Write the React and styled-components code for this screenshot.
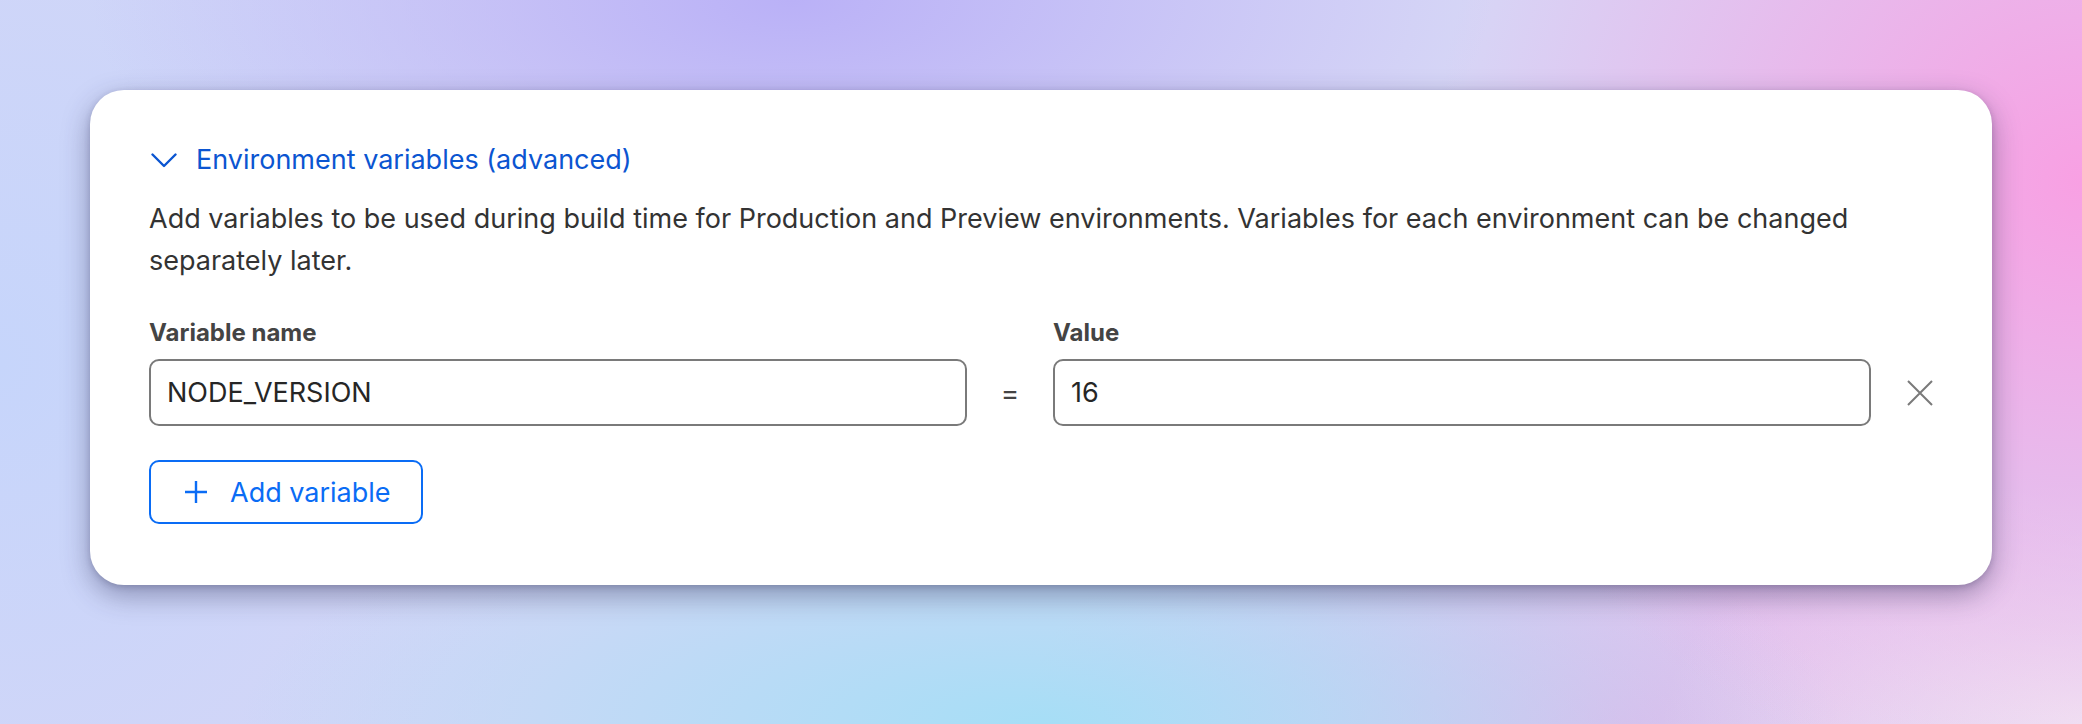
import React from 'react';
import styled, { createGlobalStyle } from 'styled-components';

const GlobalStyle = createGlobalStyle`
  html, body {
    margin: 0;
    padding: 0;
  }
  body {
    font-family: Inter, "Noto Sans", "Liberation Sans", sans-serif;
    -webkit-font-smoothing: antialiased;
  }
`;

const Page = styled.div`
  width: 2082px;
  height: 724px;
  box-sizing: border-box;
  padding: 90px 90px 0 90px;
  overflow: hidden;
  background-color: #d6d6f6;
  background-image:
    radial-gradient(ellipse 700px 300px at 38% 0%, #bab1f7 0%, rgba(186, 177, 247, 0) 100%),
    radial-gradient(ellipse 650px 620px at 100% 25%, #f8a0e3 0%, rgba(248, 160, 227, 0) 100%),
    radial-gradient(ellipse 800px 260px at 50% 100%, #a6def6 0%, rgba(166, 222, 246, 0) 100%),
    radial-gradient(ellipse 600px 700px at 0% 50%, #c6d5fb 0%, rgba(198, 213, 251, 0) 100%),
    radial-gradient(ellipse 420px 240px at 100% 100%, #efe6f4 0%, rgba(239, 230, 244, 0) 100%),
    radial-gradient(ellipse 600px 300px at 78% 100%, #e5b8ea 0%, rgba(229, 184, 234, 0) 100%);
`;

const Card = styled.section`
  width: 1902px;
  box-sizing: border-box;
  background: #ffffff;
  border-radius: 34px;
  padding: 52px 59px 61px 59px;
  box-shadow: 0 10px 28px rgba(40, 40, 80, 0.4), 0 2px 6px rgba(40, 40, 80, 0.2);
  display: flex;
  flex-direction: column;
`;

const Toggle = styled.button`
  display: flex;
  align-items: center;
  gap: 19px;
  padding: 0 0 0 2px;
  margin: 0;
  border: none;
  background: none;
  color: #0b55d1;
  font-family: inherit;
  font-size: 27px;
  line-height: 36px;
  cursor: pointer;
  align-self: flex-start;
`;

const Description = styled.p`
  margin: 20px 0 0 0;
  font-size: 27px;
  line-height: 42px;
  color: #333333;
`;

const Fields = styled.div`
  display: grid;
  grid-template-columns: 1fr 86px 1fr 62px;
  align-items: center;
  row-gap: 10px;
  margin-top: 35px;
`;

const Label = styled.label`
  grid-row: 1;
  grid-column: ${({ $col }) => $col};
  font-size: 24px;
  line-height: 32px;
  font-weight: 700;
  color: #444444;
`;

const Input = styled.input`
  grid-row: 2;
  grid-column: ${({ $col }) => $col};
  box-sizing: border-box;
  width: 100%;
  height: 67px;
  border: 2px solid #7a7a7a;
  border-radius: 10px;
  padding: 0 16px;
  font-family: inherit;
  font-size: 27px;
  color: #262626;
  background: #fff;
  outline: none;
`;

const Equals = styled.span`
  grid-row: 2;
  grid-column: 2;
  text-align: center;
  font-size: 28px;
  color: #444;
`;

const RemoveButton = styled.button`
  grid-row: 2;
  grid-column: 4;
  justify-self: end;
  width: 26px;
  height: 26px;
  padding: 0;
  border: none;
  background: none;
  display: flex;
  cursor: pointer;
`;

const AddButton = styled.button`
  align-self: flex-start;
  display: flex;
  align-items: center;
  gap: 22px;
  height: 64px;
  box-sizing: border-box;
  margin-top: 34px;
  padding: 0 30px 0 33px;
  border: 2px solid #0a6cf5;
  border-radius: 10px;
  background: #fff;
  color: #0a6cf5;
  font-family: inherit;
  font-size: 27px;
  cursor: pointer;
`;

const Chevron = () => (
  <svg width="26" height="15" viewBox="0 0 26 15" fill="none">
    <path d="M1.5 1.5 L13 13 L24.5 1.5" stroke="#0b55d1" strokeWidth="2.4" strokeLinecap="round" strokeLinejoin="round" />
  </svg>
);

const Plus = () => (
  <svg width="24" height="24" viewBox="0 0 24 24" fill="none">
    <path d="M12 1 V23 M1 12 H23" stroke="#0a6cf5" strokeWidth="2.4" />
  </svg>
);

const Cross = () => (
  <svg width="26" height="26" viewBox="0 0 26 26" fill="none">
    <path d="M1 1 L25 25 M25 1 L1 25" stroke="#7a7a7a" strokeWidth="2" />
  </svg>
);

export default function App() {
  return (
    <>
      <GlobalStyle />
      <Page>
        <Card>
          <Toggle>
            <Chevron />
            Environment variables (advanced)
          </Toggle>
          <Description>
            Add variables to be used during build time for Production and Preview environments. Variables for each
            environment can be changed separately later.
          </Description>
          <Fields>
            <Label $col="1">Variable name</Label>
            <Label $col="3">Value</Label>
            <Input $col="1" defaultValue="NODE_VERSION" />
            <Equals>=</Equals>
            <Input $col="3" defaultValue="16" />
            <RemoveButton aria-label="Remove">
              <Cross />
            </RemoveButton>
          </Fields>
          <AddButton>
            <Plus />
            Add variable
          </AddButton>
        </Card>
      </Page>
    </>
  );
}
